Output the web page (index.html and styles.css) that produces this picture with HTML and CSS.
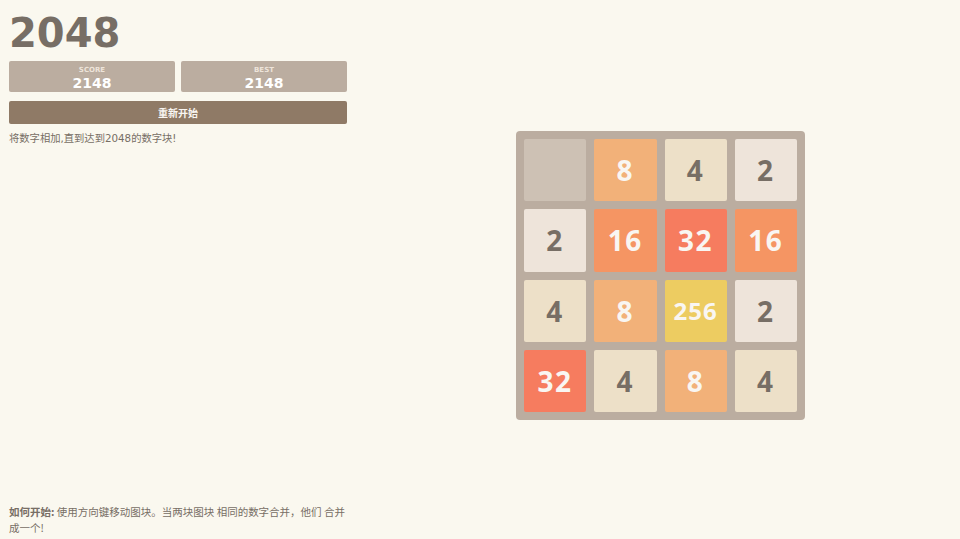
FILE: index.html
```html
<!DOCTYPE html>
<html>
<head>
    <title>2048</title>
    <link rel="stylesheet" href="styles.css">
</head>
<body>
    <div class="sidebar">
        <h1 class="title">2048</h1>
        <div class="scores">
            <div class="score-box">
                <div class="score-label">SCORE</div>
                <div class="score-value">2148</div>
            </div>
            <div class="score-box">
                <div class="score-label">BEST</div>
                <div class="score-value">2148</div>
            </div>
        </div>
        <button class="restart">重新开始</button>
        <p class="intro">将数字相加,直到达到2048的数字块!</p>
        <p class="how-to"><strong>如何开始:</strong> 使用方向键移动图块。当两块图块 相同的数字合并，他们 合并<br>成一个!</p>
    </div>

    <div class="main">
        <div class="board">
            <div class="tile empty"></div>
            <div class="tile t8">8</div>
            <div class="tile t4">4</div>
            <div class="tile t2">2</div>

            <div class="tile t2">2</div>
            <div class="tile t16">16</div>
            <div class="tile t32">32</div>
            <div class="tile t16">16</div>

            <div class="tile t4">4</div>
            <div class="tile t8">8</div>
            <div class="tile t256">256</div>
            <div class="tile t2">2</div>

            <div class="tile t32">32</div>
            <div class="tile t4">4</div>
            <div class="tile t8">8</div>
            <div class="tile t4">4</div>
        </div>
    </div>
</body>
</html>
```

FILE: styles.css
```css
body {
    margin: 0;
    height: 539px;
    display: flex;
    background-color: #faf8ef;
    color: #776e65;
    font-family: "Open Sans", "Noto Sans CJK SC", sans-serif;
}

.sidebar {
    width: 338px;
    padding: 9px;
    display: flex;
    flex-direction: column;
    font-family: "Noto Sans CJK SC", sans-serif;
}

.title {
    margin: 0;
    font-family: "DejaVu Sans", sans-serif;
    font-size: 40px;
    line-height: 48px;
    font-weight: bold;
}

.scores {
    display: flex;
    gap: 6px;
    margin-top: 4px;
}

.score-box {
    flex: 1;
    height: 31px;
    background-color: #bbada0;
    border-radius: 2px;
    text-align: center;
    color: white;
    font-family: "DejaVu Sans", sans-serif;
    font-weight: bold;
}

.score-label {
    font-size: 7px;
    line-height: 8px;
    margin-top: 5px;
    color: #eee4da;
}

.score-value {
    font-size: 14px;
    line-height: 16px;
    margin-top: 1px;
}

.restart {
    margin-top: 9px;
    height: 23px;
    border: none;
    border-radius: 2px;
    background-color: #8f7a66;
    color: #f9f6f2;
    font-family: "Noto Sans CJK SC", sans-serif;
    font-size: 10px;
    font-weight: bold;
    cursor: pointer;
}

.intro {
    margin: 7px 0 0;
    font-family: "DejaVu Sans", "Noto Sans CJK SC", sans-serif;
    font-size: 10.3px;
    line-height: 14px;
}

.how-to {
    margin: auto 0 -5px;
    font-size: 10.5px;
    line-height: 15.5px;
}

.main {
    flex: 1;
    display: flex;
    align-items: center;
    justify-content: center;
    padding: 12px 0 0 5px;
}

.board {
    width: 289px;
    height: 289px;
    box-sizing: border-box;
    padding: 8px;
    display: grid;
    grid-template-columns: repeat(4, 1fr);
    grid-template-rows: repeat(4, 1fr);
    gap: 8px;
    background-color: #bbada0;
    border-radius: 4px;
}

.tile {
    border-radius: 2px;
    display: flex;
    align-items: center;
    justify-content: center;
    font-size: 28px;
    font-weight: bold;
    letter-spacing: 1.5px;
    color: #776e65;
}

.empty { background-color: #cdc1b4; }
.t2 { background-color: #eee4da; }
.t4 { background-color: #ede0c8; }
.t8 { background-color: #f2b179; color: #f9f6f2; }
.t16 { background-color: #f59563; color: #f9f6f2; }
.t32 { background-color: #f67c5f; color: #f9f6f2; }
.t256 { background-color: #edcc61; color: #f9f6f2; font-size: 24px; letter-spacing: 1px; }
```
